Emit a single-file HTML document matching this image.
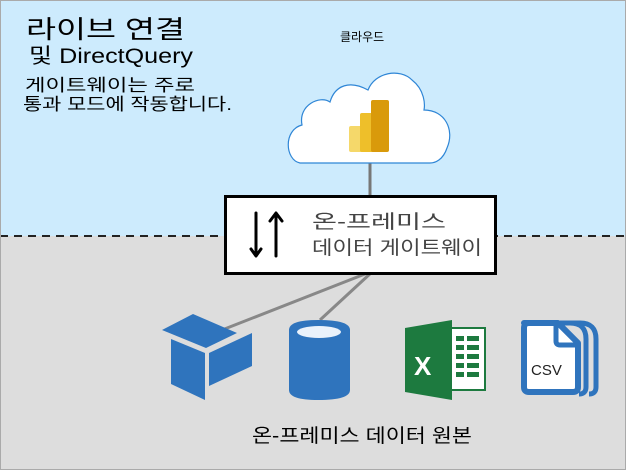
<!DOCTYPE html>
<html><head><meta charset="utf-8"><style>
html,body{margin:0;padding:0}
body{width:626px;height:470px;overflow:hidden;font-family:"Liberation Sans","Noto Sans CJK KR",sans-serif}
</style></head><body>
<svg width="626" height="470" xmlns="http://www.w3.org/2000/svg" style="display:block">
<rect x="0" y="0" width="626" height="236" fill="#cdebfd"/>
<rect x="0" y="236" width="626" height="234" fill="#dddddd"/>
<line x1="0" y1="236" x2="626" y2="236" stroke="#222" stroke-width="2" stroke-dasharray="8,6"/>
<rect x="0.5" y="0.5" width="625" height="469" fill="none" stroke="#aaa"/>
<g font-family="'Liberation Sans','Noto Sans CJK KR',sans-serif" fill="#000">
<text x="26" y="38" font-size="25" textLength="159" lengthAdjust="spacingAndGlyphs">라이브 연결</text>
<text x="29" y="63" font-size="21" textLength="164" lengthAdjust="spacingAndGlyphs">및 DirectQuery</text>
<text x="25" y="91" font-size="17" textLength="170" lengthAdjust="spacingAndGlyphs">게이트웨이는 주로</text>
<text x="23" y="110" font-size="17" textLength="209" lengthAdjust="spacingAndGlyphs">통과 모드에 작동합니다.</text>
<text x="340" y="41" font-size="12">클라우드</text>
<text x="252" y="442" font-size="19" textLength="220" lengthAdjust="spacingAndGlyphs">온-프레미스 데이터 원본</text>
</g>
<line x1="370" y1="160" x2="370" y2="198" stroke="#777" stroke-width="3"/>
<line x1="370" y1="272" x2="222" y2="330" stroke="#888" stroke-width="3"/>
<line x1="372" y1="272" x2="320" y2="320" stroke="#888" stroke-width="3"/>
<path d="M300,163 C285,160 283,130 302,125 C298,105 320,95 330,102 C335,85 350,80 368,90 C375,72 400,68 412,80 C425,90 425,105 424,110 C445,110 455,130 447,148 C443,160 435,163 430,163 Z" fill="#fff" stroke="#2f86d6" stroke-width="1.2"/>
<rect x="349" y="126" width="20" height="26" rx="2" fill="#f5d86a"/>
<rect x="360" y="113" width="19" height="39" rx="2" fill="#eebf2a"/>
<rect x="371" y="100" width="18" height="52" rx="2" fill="#d99a0b"/>
<rect x="225.5" y="196.5" width="270" height="77" fill="#fff" stroke="#000" stroke-width="3"/>
<g stroke="#000" stroke-width="3" fill="none" stroke-linecap="round" stroke-linejoin="round">
<path d="M256,213 V255 M251,249 L256,256 L261,249"/>
<path d="M276,256 V214 M270,221 L276,213 L282,221"/>
</g>
<g font-family="'Liberation Sans','Noto Sans CJK KR',sans-serif" fill="#444" font-size="19">
<text x="312" y="228" textLength="134" lengthAdjust="spacingAndGlyphs">온-프레미스</text>
<text x="312" y="254" textLength="170" lengthAdjust="spacingAndGlyphs">데이터 게이트웨이</text>
</g>
<path d="M162,330 L193,314 L237,333 L206,348 Z" fill="#2f74bd"/>
<path d="M171,339 L205,353 L205,400 L171,384 Z" fill="#2f74bd"/>
<path d="M209,353 L252,333 L252,366 L209,386 Z" fill="#2f74bd"/>
<path d="M289,330 Q289,320 318,320 Q350,320 350,330 V390 Q350,400 318,400 Q289,400 289,390 Z" fill="#2f74bd"/>
<ellipse cx="319" cy="332" rx="22" ry="6" fill="#eaf2fb"/>
<rect x="450" y="328" width="35" height="62" fill="#fff" stroke="#1d7a3f" stroke-width="2"/>
<g fill="#1d7a3f"><rect x="456" y="336" width="8" height="5"/><rect x="467" y="336" width="12" height="5"/><rect x="456" y="345" width="8" height="5"/><rect x="467" y="345" width="12" height="5"/><rect x="456" y="354" width="8" height="5"/><rect x="467" y="354" width="12" height="5"/><rect x="456" y="363" width="8" height="5"/><rect x="467" y="363" width="12" height="5"/><rect x="456" y="372" width="8" height="5"/><rect x="467" y="372" width="12" height="5"/></g>
<path d="M405,328 L452,320 L452,400 L405,392 Z" fill="#1d7a3f"/>
<text x="414" y="375" font-family="'Liberation Sans',sans-serif" font-weight="bold" font-size="26" fill="#fff">X</text>
<path d="M560,323 h10 q16,0 16,16 v48 q0,7 -7,7" fill="none" stroke="#2f74bd" stroke-width="5"/>
<path d="M570,323 h10 q16,0 16,16 v48 q0,7 -7,7" fill="none" stroke="#2f74bd" stroke-width="5"/>
<path d="M524,323 h34 l20,20 v44 q0,5 -5,5 h-44 q-5,0 -5,-5 v-59 q0,-5 5,-5 Z" fill="#fff" stroke="#2f74bd" stroke-width="6" stroke-linejoin="round"/>
<path d="M556,323 v18 q0,4 4,4 h18" fill="none" stroke="#2f74bd" stroke-width="5"/>
<text x="531" y="375" font-family="'Liberation Sans',sans-serif" font-size="15" fill="#222">CSV</text>
</svg>
</body></html>
